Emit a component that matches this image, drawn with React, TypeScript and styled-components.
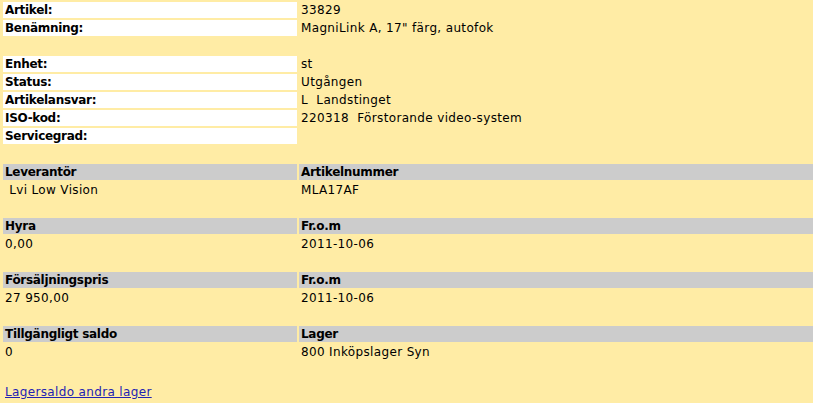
import React from "react";
import styled, { createGlobalStyle } from "styled-components";

const GlobalStyle = createGlobalStyle`
  html, body {
    margin: 0;
    padding: 0;
    background: #ffeca5;
  }
  body {
    font-family: "DejaVu Sans", Verdana, sans-serif;
    font-size: 12px;
    color: #000;
  }
`;

type Pair = { label?: string; value?: string };

const topRows: (Pair | null)[] = [
  { label: "Artikel:", value: "33829" },
  { label: "Benämning:", value: "MagniLink A, 17\" färg, autofok" },
  null,
  { label: "Enhet:", value: "st" },
  { label: "Status:", value: "Utgången" },
  { label: "Artikelansvar:", value: "L  Landstinget" },
  { label: "ISO-kod:", value: "220318  Förstorande video-system" },
  { label: "Servicegrad:", value: "" },
  null,
];

const sections = [
  { left: ["Leverantör", " Lvi Low Vision"], right: ["Artikelnummer", "MLA17AF"] },
  { left: ["Hyra", "0,00"], right: ["Fr.o.m", "2011-10-06"] },
  { left: ["Försäljningspris", "27 950,00"], right: ["Fr.o.m", "2011-10-06"] },
  { left: ["Tillgängligt saldo", "0"], right: ["Lager", "800 Inköpslager Syn"] },
];

function App() {
  return (
    <>
      <GlobalStyle />
      <Page>
        <Grid>
          {topRows.map((row, idx) =>
            row ? (
              <React.Fragment key={idx}>
                <Label>{row.label}</Label>
                <Value>{row.value}</Value>
              </React.Fragment>
            ) : (
              <Spacer key={idx} />
            )
          )}
          {sections.map((s, idx) => (
            <React.Fragment key={"s" + idx}>
              <Header>{s.left[0]}</Header>
              <Header>{s.right[0]}</Header>
              <Value>{s.left[1]}</Value>
              <Value>{s.right[1]}</Value>
              {idx < sections.length - 1 && <Spacer />}
            </React.Fragment>
          ))}
        </Grid>
        <StockLink href="#">Lagersaldo andra lager</StockLink>
      </Page>
    </>
  );
}

const Page = styled.div`
  padding: 2px 0 0 3px;
`;

const Grid = styled.div`
  display: grid;
  grid-template-columns: 294px 1fr;
  grid-auto-rows: 16px;
  gap: 2px;
`;

const Cell = styled.div`
  padding: 1px 2px;
  line-height: 15px;
  white-space: pre;
  overflow: hidden;
`;

const Label = styled(Cell)`
  background: #ffffff;
  font-weight: bold;
  letter-spacing: -0.3px;
`;

const Value = styled(Cell)`
  letter-spacing: 0.35px;
`;

const Header = styled(Cell)`
  background: #cccccc;
  font-weight: bold;
  letter-spacing: -0.3px;
`;

const Spacer = styled.div`
  grid-column: 1 / -1;
`;

const StockLink = styled.a`
  display: block;
  margin-top: 25px;
  margin-left: 2px;
  line-height: 15px;
  letter-spacing: 0.35px;
  color: #2222b4;
  text-decoration: underline;
  width: fit-content;
`;

export default App;
